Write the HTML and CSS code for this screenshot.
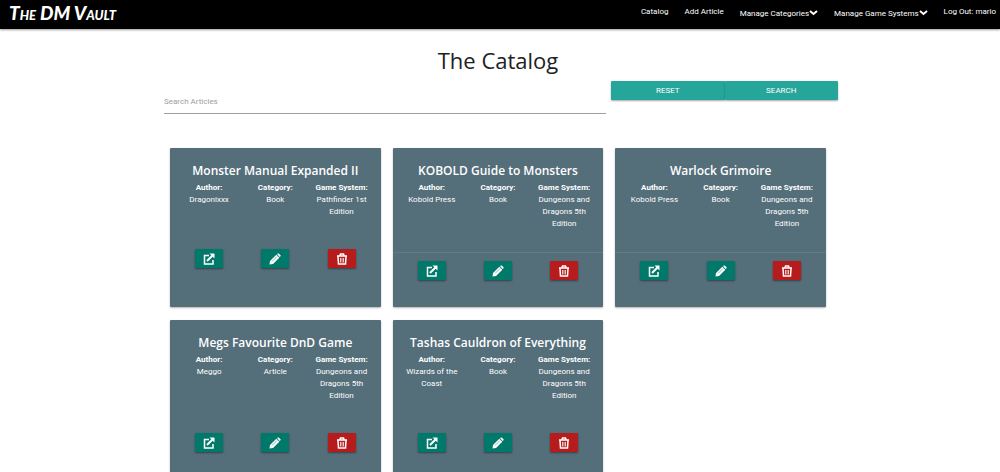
FILE: index.html
```html
<!DOCTYPE html>
<html lang="en">
<head>
<meta charset="utf-8">
<title>The DM Vault</title>
<link rel="stylesheet" href="styles.css">
</head>
<body>
<svg class="sprite" aria-hidden="true">
  <symbol id="open" viewBox="0 0 24 24"><path d="M12 5H3v17h17v-8" fill="none" stroke="currentColor" stroke-width="3"/><path d="M8 16 19 5" stroke="currentColor" stroke-width="4"/><path d="M13 1h10v10z" fill="currentColor"/></symbol>
  <symbol id="edit" viewBox="0 0 24 24"><path d="m16 2 2-1q1-.6 2 .3l3 3q.8.9 0 2L21 8zM14.600 3.500l6 6L8 22l-7 1 1-7z" fill="currentColor"/><path d="m6 17 10-10" stroke="#00796b" stroke-width="1"/></symbol>
  <symbol id="trash" viewBox="0 0 24 24"><path d="M2 6h20M8 5l1-3h6l1 3M4 7l1 15h14l1-15" fill="none" stroke="currentColor" stroke-width="3"/><path d="M9 10v9M12 10v9M15 10v9" stroke="currentColor" stroke-width="1.500"/></symbol>
  <symbol id="chevron" viewBox="0 0 18 12"><path d="m2 3 7 6 7-6" fill="none" stroke="currentColor" stroke-width="4"/></symbol>
</svg>
<nav class="navbar">
  <a class="brand" href="#">The DM Vault</a>
  <ul class="menu">
    <li><a href="#">Catalog</a></li>
    <li><a href="#">Add Article</a></li>
    <li class="dropdown"><a href="#">Manage Categories<svg class="chevron"><use href="#chevron"/></svg></a></li>
    <li class="dropdown"><a href="#">Manage Game Systems<svg class="chevron"><use href="#chevron"/></svg></a></li>
    <li><a href="#">Log Out: mario</a></li>
  </ul>
</nav>
<main class="catalog">
  <h1>The Catalog</h1>
  <form class="search">
    <input class="query" type="text" placeholder="Search Articles" aria-label="Search Articles">
    <div class="search-buttons">
      <button type="reset">RESET</button>
      <button type="submit">SEARCH</button>
    </div>
  </form>
  <div class="cards">
    <article class="card">
      <h2>Monster Manual Expanded II</h2>
      <dl class="details">
        <div><dt>Author:</dt><dd>Dragonixxx</dd></div>
        <div><dt>Category:</dt><dd>Book</dd></div>
        <div><dt>Game System:</dt><dd>Pathfinder 1st Edition</dd></div>
      </dl>
      <div class="actions">
        <a class="btn" href="#" aria-label="Open"><svg><use href="#open"/></svg></a>
        <a class="btn" href="#" aria-label="Edit"><svg><use href="#edit"/></svg></a>
        <button class="btn danger" type="button" aria-label="Delete"><svg><use href="#trash"/></svg></button>
      </div>
    </article>
    <article class="card">
      <h2>KOBOLD Guide to Monsters</h2>
      <dl class="details">
        <div><dt>Author:</dt><dd>Kobold Press</dd></div>
        <div><dt>Category:</dt><dd>Book</dd></div>
        <div><dt>Game System:</dt><dd>Dungeons and Dragons 5th Edition</dd></div>
      </dl>
      <div class="actions ruled">
        <a class="btn" href="#" aria-label="Open"><svg><use href="#open"/></svg></a>
        <a class="btn" href="#" aria-label="Edit"><svg><use href="#edit"/></svg></a>
        <button class="btn danger" type="button" aria-label="Delete"><svg><use href="#trash"/></svg></button>
      </div>
    </article>
    <article class="card">
      <h2>Warlock Grimoire</h2>
      <dl class="details">
        <div><dt>Author:</dt><dd>Kobold Press</dd></div>
        <div><dt>Category:</dt><dd>Book</dd></div>
        <div><dt>Game System:</dt><dd>Dungeons and Dragons 5th Edition</dd></div>
      </dl>
      <div class="actions ruled">
        <a class="btn" href="#" aria-label="Open"><svg><use href="#open"/></svg></a>
        <a class="btn" href="#" aria-label="Edit"><svg><use href="#edit"/></svg></a>
        <button class="btn danger" type="button" aria-label="Delete"><svg><use href="#trash"/></svg></button>
      </div>
    </article>
    <article class="card">
      <h2>Megs Favourite DnD Game</h2>
      <dl class="details">
        <div><dt>Author:</dt><dd>Meggo</dd></div>
        <div><dt>Category:</dt><dd>Article</dd></div>
        <div><dt>Game System:</dt><dd>Dungeons and Dragons 5th Edition</dd></div>
      </dl>
      <div class="actions">
        <a class="btn" href="#" aria-label="Open"><svg><use href="#open"/></svg></a>
        <a class="btn" href="#" aria-label="Edit"><svg><use href="#edit"/></svg></a>
        <button class="btn danger" type="button" aria-label="Delete"><svg><use href="#trash"/></svg></button>
      </div>
    </article>
    <article class="card">
      <h2>Tashas Cauldron of Everything</h2>
      <dl class="details">
        <div><dt>Author:</dt><dd>Wizards of the Coast</dd></div>
        <div><dt>Category:</dt><dd>Book</dd></div>
        <div><dt>Game System:</dt><dd>Dungeons and Dragons 5th Edition</dd></div>
      </dl>
      <div class="actions">
        <a class="btn" href="#" aria-label="Open"><svg><use href="#open"/></svg></a>
        <a class="btn" href="#" aria-label="Edit"><svg><use href="#edit"/></svg></a>
        <button class="btn danger" type="button" aria-label="Delete"><svg><use href="#trash"/></svg></button>
      </div>
    </article>
  </div>
</main>
</body>
</html>
```
FILE: styles.css
```css
* { box-sizing: border-box; }
html { scrollbar-width: none; }
body {
  margin: 0;
  background: #fff;
  color: #212121;
  font: 8px/12px Roboto, "Noto Sans", sans-serif;
}
a { color: inherit; text-decoration: none; }
.sprite { display: none; }

.navbar {
  display: flex;
  justify-content: space-between;
  align-items: center;
  height: 29px;
  padding: 0 4px 0 9px;
  background: #000;
  color: #fff;
  box-shadow: 0 1px 2px rgba(0, 0, 0, .4);
}
.brand {
  padding-bottom: 4px;
  font: italic 900 19px/24px Lato, sans-serif;
  font-variant: small-caps;
}
.menu {
  display: flex;
  gap: 16px;
  margin: 0;
  padding: 0 0 4px;
  list-style: none;
}
.dropdown { padding-top: 2px; }
.dropdown a { display: flex; }
.chevron { width: 9px; height: 7px; margin-top: 1px; }

.catalog { margin: 0 16.2% 0 15.8%; }
h1 {
  margin: 0;
  padding-top: 16px;
  font-family: "Open Sans", sans-serif;
  font-size: 22px;
  line-height: 30px;
  font-weight: 400;
  text-align: center;
}
.search {
  display: flex;
  gap: 5px;
  margin-top: 6px;
  padding-left: 6px;
}
.query {
  flex: 37;
  min-width: 0;
  height: 33px;
  padding: 8px 0 0;
  border: 0;
  border-bottom: 1px solid #9e9e9e;
  outline: 0;
  font: inherit;
}
.query::placeholder { color: #9e9e9e; }
.search-buttons { display: flex; flex: 19; }
.search-buttons button {
  flex: 1;
  height: 19px;
  padding: 0;
  border: 0;
  border-radius: 1px;
  background: #26a69a;
  color: #fff;
  font: inherit;
  box-shadow: 0 1px 2px rgba(0, 0, 0, .35);
}

.cards {
  display: grid;
  grid-template-columns: repeat(3, 1fr);
  gap: 13px 12px;
  margin-top: 34px;
  padding: 0 12px;
}
.card {
  display: flex;
  flex-direction: column;
  border-radius: 1px;
  background: #546e7a;
  color: #fff;
  box-shadow: 0 1px 2px rgba(0, 0, 0, .3);
}
h2 {
  margin: 0;
  padding-top: 13px;
  font-family: "Open Sans", sans-serif;
  font-size: 12px;
  line-height: 20px;
  font-weight: 600;
  text-align: center;
}
.details {
  display: grid;
  grid-template-columns: repeat(3, 1fr);
  margin: 0;
  padding: 1px 6px 22px;
  text-align: center;
}
dt { font-weight: 700; }
dd { margin: 0; padding: 0 4px; }
.actions {
  display: grid;
  grid-template-columns: repeat(3, 1fr);
  justify-items: center;
  padding: 8px 6px 27px;
  border-top: 1px solid transparent;
}
.ruled { border-top-color: #647b86; }
.btn {
  display: flex;
  justify-content: center;
  align-items: center;
  width: 28px;
  height: 19px;
  padding: 0;
  border: 0;
  border-radius: 1px;
  background: #00796b;
  color: #fff;
  box-shadow: 0 1px 2px rgba(0, 0, 0, .4);
}
.btn svg { width: 12px; height: 12px; }
.danger { background: #b71c1c; }
```
